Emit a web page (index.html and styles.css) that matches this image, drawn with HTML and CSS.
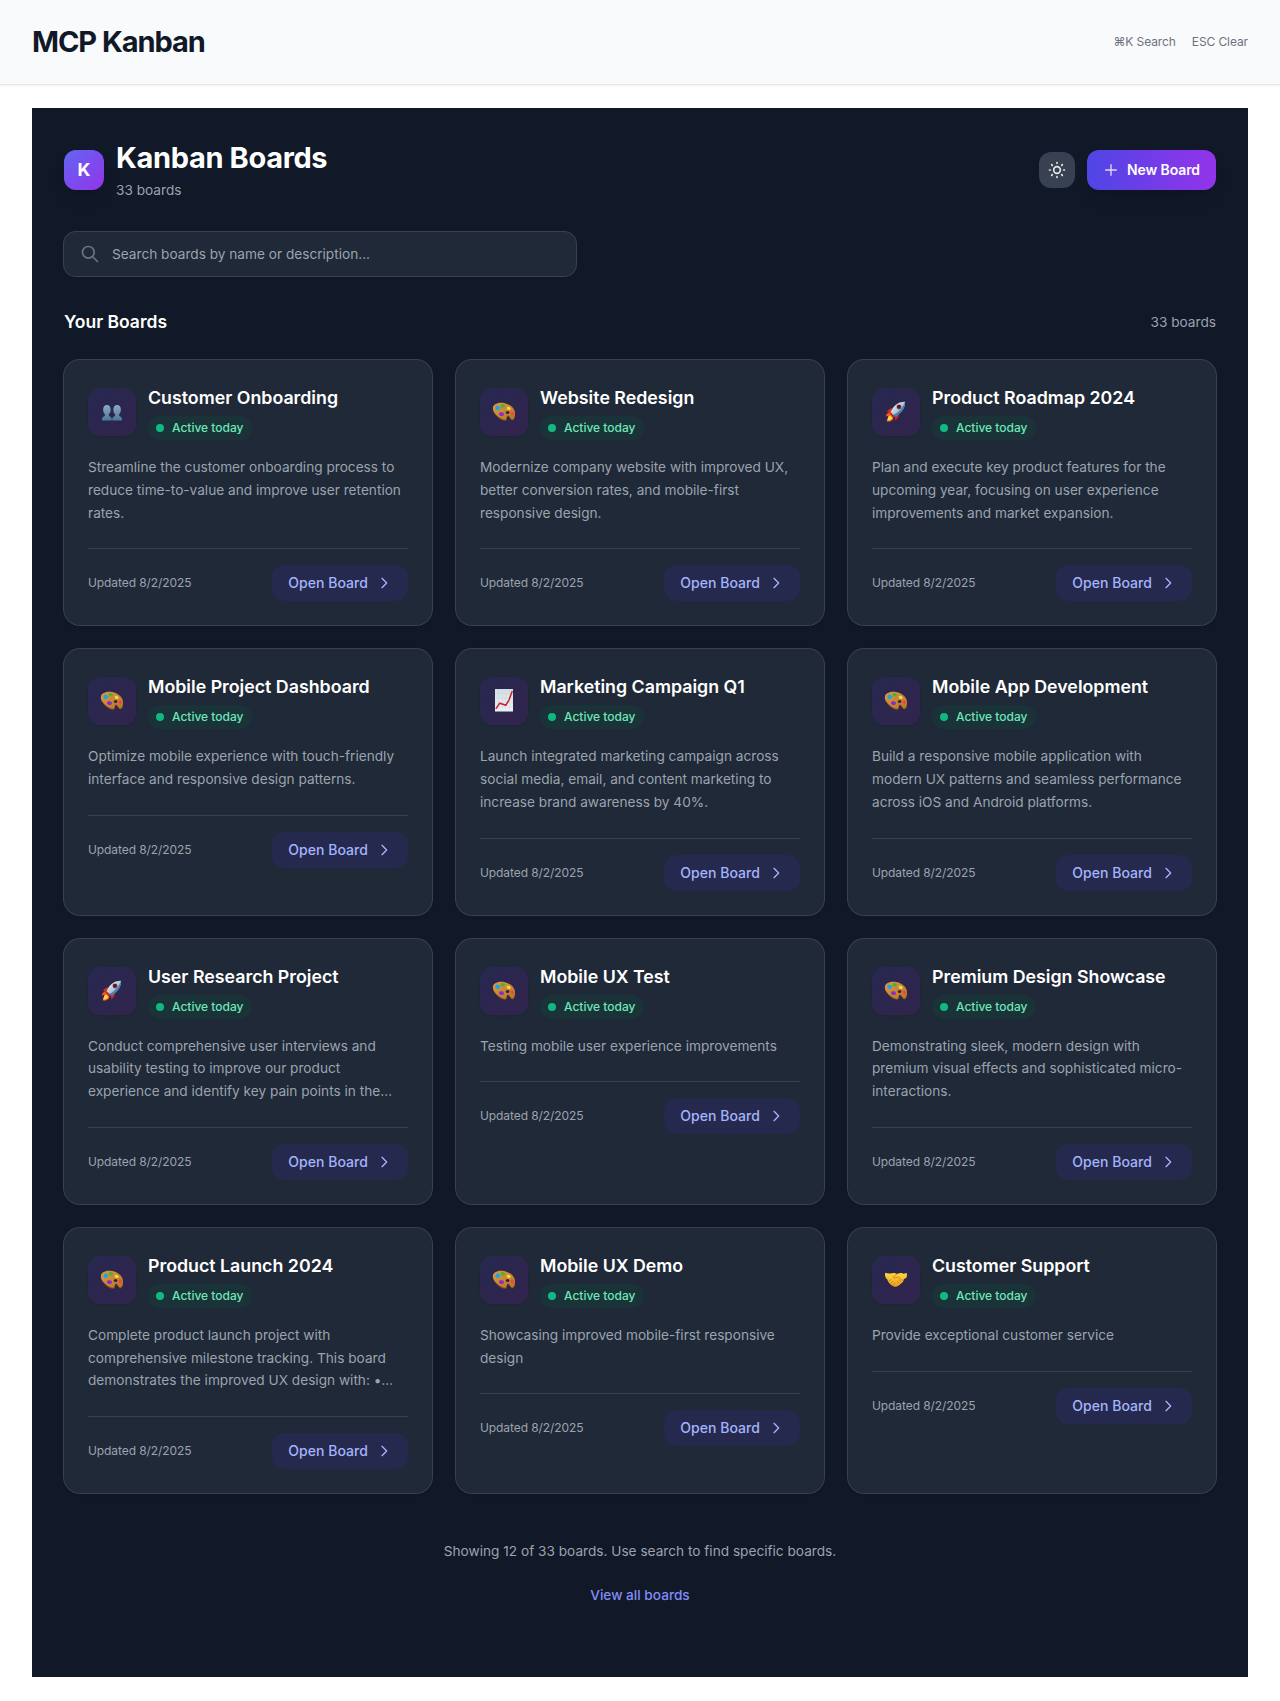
FILE: index.html
```html
<!DOCTYPE html>
<html lang="en">
<head>
<meta charset="utf-8">
<title>MCP Kanban</title>
<link rel="stylesheet" href="styles.css">
</head>
<body>
<svg class="sprite" width="0" height="0" aria-hidden="true">
  <defs>
    <linearGradient id="g-people" x1="0" y1="0" x2="0" y2="1"><stop offset="0" stop-color="#86abc5"/><stop offset="1" stop-color="#4d7799"/></linearGradient>
    <linearGradient id="g-wood" x1="0" y1="0" x2="1" y2="1"><stop offset="0" stop-color="#dc9a45"/><stop offset="1" stop-color="#b87425"/></linearGradient>
    <linearGradient id="g-hand" x1="0" y1="0" x2="0" y2="1"><stop offset="0" stop-color="#ffd83f"/><stop offset="1" stop-color="#eb9e1e"/></linearGradient>
    <linearGradient id="g-paper" x1="0" y1="0" x2="0" y2="1"><stop offset="0" stop-color="#d3dde5"/><stop offset="1" stop-color="#f0f3f5"/></linearGradient>
    <linearGradient id="g-rocket" x1="0" y1="0" x2="1" y2="1"><stop offset="0" stop-color="#f2f6f8"/><stop offset=".5" stop-color="#b9cbd6"/><stop offset="1" stop-color="#3d78a8"/></linearGradient>
  </defs>
  <symbol id="people" viewBox="0 0 24 24">
    <g fill="url(#g-people)">
      <path d="M6.900 5C4.500 5 3.100 6.900 3.100 9.400c0 2.200.7 3.800 1.800 4.900.2 1.600-.3 2-1.400 2.500C2.300 17.300 2 18 2 20.600h9.800c0-2.200-.4-3.300-1.600-3.800-1.100-.5-1.500-.9-1.300-2.500 1.100-1.100 1.800-2.700 1.800-4.900C10.700 6.900 9.300 5 6.900 5z"/>
      <path d="M17.100 5c-2.400 0-3.800 1.900-3.800 4.400 0 2.200.7 3.800 1.800 4.900.2 1.600-.2 2-1.300 2.500-1.200.5-1.600 1.600-1.600 3.800H22c0-2.600-.3-3.300-1.500-3.800-1.100-.5-1.600-.9-1.400-2.500 1.100-1.100 1.800-2.700 1.800-4.900 0-2.500-1.400-4.400-3.800-4.400z"/>
    </g>
  </symbol>
  <symbol id="palette" viewBox="0 0 24 24">
    <path fill="#7c4a17" d="M1 7.600C2 4 6.800 2.300 12 3.300c6 1.200 11.200 5.400 11.100 10.900 0 3-.8 6.200-2.800 6.200-1.900 0-2.600-4-4.300-3.900-1.400.1-.7 3.100-1.700 3.900-1.400 1.200-5.500-.2-8.300-2.900C2.600 14.300.2 11 1 7.600z"/>
    <path fill="url(#g-wood)" d="M1 7.200C2 3.800 6.800 2.200 12 3.100c6 1.100 11.100 5.100 11 10.400 0 2.900-1 6-2.700 6-1.900 0-2.700-4-4.500-3.900-1.500.1-.8 3.100-1.800 3.800-1.400 1-5.200-.4-8-2.900C2.800 13.600.2 10.600 1 7.200z"/>
    <ellipse cx="15.600" cy="12.500" rx="1.800" ry="1.500" fill="#2a2548"/>
    <path fill="#22a5dc" d="M3.500 8.200c-.5-2 1.200-3.100 2.600-2.500 1.300.5 2.700 1 2.300 2.600-.4 1.500-2 1.300-2.500 1.700-.8.500-2-.3-2.400-1.800z"/>
    <path fill="#43b536" d="M9 4.700c.8-1.100 2.500-.6 3.400.2.800.7 1 1.900-.1 2.400-1.200.5-3-.1-3.400-.9-.2-.6-.2-1.200.1-1.700z"/>
    <path fill="#f5d83a" d="M15 7.200c.9-.9 2.500-.4 3.300.5.700.8.700 1.700-.2 2.100-1.200.5-2.700 0-3.200-.9-.3-.6-.3-1.200.1-1.700z"/>
    <path fill="#ef4250" d="M18.900 12.600c.2-1.100 1.400-1.200 2.200-.5.700.7.900 2.300.2 3-.8.600-1.800-.1-2.200-1-.2-.5-.3-1-.2-1.500z"/>
    <path fill="#862bd3" d="M7.100 13.400c.5-1.300 2.300-1.500 3.600-.8 1.300.6 1.600 2.300.7 3-1 .8-2.700.6-3.600-.1-.7-.6-.9-1.400-.7-2.100z"/>
  </symbol>
  <symbol id="rocket" viewBox="0 -.4 26 26">
    <path fill="#f5521c" d="M6.600 12.800c-2.600.1-4 1.700-4.800 4.800 2-.9 2.800-.5 4.400-.7-2 2-3.300 3.700-3.200 6.100 3.700.4 6.400-.8 7.300-3.900z"/>
    <path fill="#ffd83b" d="M6.200 16c-1.700 1.500-2.500 3.400-2.500 6 2.600-.1 4.600-1 5.600-3.200z"/>
    <path fill="#d42c25" d="M10.800 8.800C7.600 8 4.800 9.500 3 12.800c1.800-.4 3.300-.1 4.800.6zM16 13.800c.5 3.200-.8 6-4 7.900.4-1.900 0-3.300-.8-4.700z"/>
    <path fill="url(#g-rocket)" d="M22.800 1.500c-5.900-.2-10.900 2.800-13.800 7.800-1 1.600-1.800 3-2.100 4.300l4 4c1.600-.3 3.100-1.200 4.600-2.300 4.700-3.300 7.600-8.100 7.300-13.800z"/>
    <path fill="#3a81bd" d="M22.800 1.500c.3 5.700-2.600 10.500-7.300 13.800-1.500 1.100-3 2-4.600 2.300l-1.500-1.500C15.500 13.700 20 9.200 22.800 1.500z"/>
    <circle cx="16.300" cy="7.100" r="2.700" fill="#c42d38"/><circle cx="16.200" cy="7" r="1.900" fill="#25273a"/>
    <path stroke="#b5261f" stroke-width="1.500" d="m6.700 13.500 4.300 4.200"/>
  </symbol>
  <symbol id="chart" viewBox="0 0 24 24">
    <path fill="url(#g-paper)" d="M3 0h18v22.500H3z"/>
    <path stroke="#b7c7d4" stroke-width=".25" d="M6.600 0v22.500M10.200 0v22.500M13.800 0v22.500M17.400 0v22.500M3 4.500h18M3 9h18M3 13.500h18M3 18h18"/>
    <path fill="none" stroke="#cc1d28" stroke-width="1.500" stroke-linecap="round" stroke-linejoin="round" d="m4.200 19.300 3.500-5.100 6.300 2 3.200-5.700 2.900-7.900"/>
  </symbol>
  <symbol id="handshake" viewBox="0 0 24 24">
    <path fill="url(#g-hand)" d="M1.400 4.800c1.700.6 3.300.9 4.900.7 1.600-.1 2.900-.9 4.400-.5L13 6l3-.9c1.700-.3 2.500.7 3.700.6l2.900-.8c.6 1.900.4 3.500-.4 5.100l-2.300 1c-.3 2.700-2 4.100-3.600 5.300-1.900 1.500-3.500 2.800-5.200 2.500-1.800-.3-3.100-1.300-4.700-2.600-1.500-1.200-2.700-2.800-3.100-4.700L1.900 9.900C.9 8.300.7 6.500 1.400 4.800z"/>
    <path fill="none" stroke="#c57a15" stroke-width=".8" stroke-linecap="round" stroke-linejoin="round" d="m13 6-3.400 2.600c-.7 1.100.7 2.100 1.800 1.400L14 8.800l4.500 3.600M14.800 11.700l2.300 2M13 13.200l2.200 2.200M5.200 13l1.800-1.500M7 15l1.900-1.700M9.300 16.900l1.600-1.700"/>
  </symbol>
  <symbol id="chevron" viewBox="0 0 24 24"><path fill="none" stroke="currentColor" stroke-width="2" stroke-linecap="round" stroke-linejoin="round" d="m9 5 7 7-7 7"/></symbol>
</svg>

<header class="topbar">
  <h1 class="brand">MCP Kanban</h1>
  <div class="hints"><span>⌘K Search</span><span>ESC Clear</span></div>
</header>

<main class="panel">
  <div class="head">
    <div class="head-left">
      <div class="logo">K</div>
      <div>
        <h2 class="head-title">Kanban Boards</h2>
        <p class="head-sub">33 boards</p>
      </div>
    </div>
    <div class="actions">
      <button class="theme" aria-label="Toggle theme"><svg width="20" height="20" viewBox="0 0 24 24" fill="none" stroke="currentColor" stroke-width="2" stroke-linecap="round" stroke-linejoin="round"><path d="M12 3v1m0 16v1m9-9h-1M4 12H3m15.364 6.364-.707-.707M6.343 6.343l-.707-.707m12.728 0-.707.707M6.343 17.657l-.707.707M16 12a4 4 0 1 1-8 0 4 4 0 0 1 8 0z"/></svg></button>
      <button class="new"><svg width="16" height="16" viewBox="0 0 24 24" fill="none" stroke="currentColor" stroke-width="2" stroke-linecap="round"><path d="M12 4v16m8-8H4"/></svg>New Board</button>
    </div>
  </div>

  <div class="search">
    <svg width="20" height="20" viewBox="0 0 24 24" fill="none" stroke="currentColor" stroke-width="2" stroke-linecap="round" stroke-linejoin="round"><path d="m21 21-6-6m2-5a7 7 0 1 1-14 0 7 7 0 0 1 14 0z"/></svg>
    <input type="text" placeholder="Search boards by name or description...">
  </div>

  <div class="section-head"><h3>Your Boards</h3><span>33 boards</span></div>

  <div class="grid">
    <article class="card">
      <div class="card-head"><div class="tile"><svg class="emoji"><use href="#people"/></svg></div><div><h4>Customer Onboarding</h4><span class="badge">Active today</span></div></div>
      <p class="desc">Streamline the customer onboarding process to reduce time-to-value and improve user retention rates.</p>
      <div class="card-foot"><span>Updated 8/2/2025</span><button class="open">Open Board<svg><use href="#chevron"/></svg></button></div>
    </article>
    <article class="card">
      <div class="card-head"><div class="tile"><svg class="emoji"><use href="#palette"/></svg></div><div><h4>Website Redesign</h4><span class="badge">Active today</span></div></div>
      <p class="desc">Modernize company website with improved UX, better conversion rates, and mobile-first responsive design.</p>
      <div class="card-foot"><span>Updated 8/2/2025</span><button class="open">Open Board<svg><use href="#chevron"/></svg></button></div>
    </article>
    <article class="card">
      <div class="card-head"><div class="tile"><svg class="emoji"><use href="#rocket"/></svg></div><div><h4>Product Roadmap 2024</h4><span class="badge">Active today</span></div></div>
      <p class="desc">Plan and execute key product features for the upcoming year, focusing on user experience improvements and market expansion.</p>
      <div class="card-foot"><span>Updated 8/2/2025</span><button class="open">Open Board<svg><use href="#chevron"/></svg></button></div>
    </article>
    <article class="card">
      <div class="card-head"><div class="tile"><svg class="emoji"><use href="#palette"/></svg></div><div><h4>Mobile Project Dashboard</h4><span class="badge">Active today</span></div></div>
      <p class="desc">Optimize mobile experience with touch-friendly interface and responsive design patterns.</p>
      <div class="card-foot"><span>Updated 8/2/2025</span><button class="open">Open Board<svg><use href="#chevron"/></svg></button></div>
    </article>
    <article class="card">
      <div class="card-head"><div class="tile"><svg class="emoji"><use href="#chart"/></svg></div><div><h4>Marketing Campaign Q1</h4><span class="badge">Active today</span></div></div>
      <p class="desc">Launch integrated marketing campaign across social media, email, and content marketing to increase brand awareness by 40%.</p>
      <div class="card-foot"><span>Updated 8/2/2025</span><button class="open">Open Board<svg><use href="#chevron"/></svg></button></div>
    </article>
    <article class="card">
      <div class="card-head"><div class="tile"><svg class="emoji"><use href="#palette"/></svg></div><div><h4>Mobile App Development</h4><span class="badge">Active today</span></div></div>
      <p class="desc">Build a responsive mobile application with modern UX patterns and seamless performance across iOS and Android platforms.</p>
      <div class="card-foot"><span>Updated 8/2/2025</span><button class="open">Open Board<svg><use href="#chevron"/></svg></button></div>
    </article>
    <article class="card">
      <div class="card-head"><div class="tile"><svg class="emoji"><use href="#rocket"/></svg></div><div><h4>User Research Project</h4><span class="badge">Active today</span></div></div>
      <p class="desc">Conduct comprehensive user interviews and usability testing to improve our product experience and identify key pain points in the…</p>
      <div class="card-foot"><span>Updated 8/2/2025</span><button class="open">Open Board<svg><use href="#chevron"/></svg></button></div>
    </article>
    <article class="card">
      <div class="card-head"><div class="tile"><svg class="emoji"><use href="#palette"/></svg></div><div><h4>Mobile UX Test</h4><span class="badge">Active today</span></div></div>
      <p class="desc">Testing mobile user experience improvements</p>
      <div class="card-foot"><span>Updated 8/2/2025</span><button class="open">Open Board<svg><use href="#chevron"/></svg></button></div>
    </article>
    <article class="card">
      <div class="card-head"><div class="tile"><svg class="emoji"><use href="#palette"/></svg></div><div><h4>Premium Design Showcase</h4><span class="badge">Active today</span></div></div>
      <p class="desc">Demonstrating sleek, modern design with premium visual effects and sophisticated micro-interactions.</p>
      <div class="card-foot"><span>Updated 8/2/2025</span><button class="open">Open Board<svg><use href="#chevron"/></svg></button></div>
    </article>
    <article class="card">
      <div class="card-head"><div class="tile"><svg class="emoji"><use href="#palette"/></svg></div><div><h4>Product Launch 2024</h4><span class="badge">Active today</span></div></div>
      <p class="desc">Complete product launch project with comprehensive milestone tracking. This board demonstrates the improved UX design with: •…</p>
      <div class="card-foot"><span>Updated 8/2/2025</span><button class="open">Open Board<svg><use href="#chevron"/></svg></button></div>
    </article>
    <article class="card">
      <div class="card-head"><div class="tile"><svg class="emoji"><use href="#palette"/></svg></div><div><h4>Mobile UX Demo</h4><span class="badge">Active today</span></div></div>
      <p class="desc">Showcasing improved mobile-first responsive design</p>
      <div class="card-foot"><span>Updated 8/2/2025</span><button class="open">Open Board<svg><use href="#chevron"/></svg></button></div>
    </article>
    <article class="card">
      <div class="card-head"><div class="tile"><svg class="emoji"><use href="#handshake"/></svg></div><div><h4>Customer Support</h4><span class="badge">Active today</span></div></div>
      <p class="desc">Provide exceptional customer service</p>
      <div class="card-foot"><span>Updated 8/2/2025</span><button class="open">Open Board<svg><use href="#chevron"/></svg></button></div>
    </article>
  </div>

  <div class="more">
    <p>Showing 12 of 33 boards. Use search to find specific boards.</p>
    <button class="view-all">View all boards</button>
  </div>
</main>
</body>
</html>
```

FILE: styles.css
```css
*, *::before, *::after { box-sizing: border-box; }
body { margin: 0; background: #fff; font-family: Inter, "Liberation Sans", sans-serif; font-size: 13.650px; line-height: 20px; }
h1, h2, h3, h4, p { margin: 0; }
button, input { font: inherit; letter-spacing: inherit; border: 0; padding: 0; margin: 0; }
.sprite { display: block; position: absolute; }

.topbar { display: flex; align-items: center; justify-content: space-between; padding: 24px 32px; background: #f9fafc; border-bottom: 1px solid #e2e5ea; box-shadow: 0 1px 2px rgba(0, 0, 0, .06); }
.brand { font-size: 29px; line-height: 36px; font-weight: 700; letter-spacing: -1.06px; color: #111827; }
.hints { display: flex; gap: 16px; font-size: 12px; line-height: 16px; letter-spacing: -.1px; color: #6b7280; }

.panel { margin: 23px 32px 24px; padding: 32px 32px 64px; background: #111827; }
.head { display: flex; align-items: center; justify-content: space-between; }
.head-left { display: flex; align-items: center; gap: 12px; }
.logo { display: flex; align-items: center; justify-content: center; width: 40px; height: 40px; border-radius: 12px; background: linear-gradient(135deg, #6366f1, #9333ea); color: #fff; font-size: 18px; line-height: 28px; font-weight: 700; box-shadow: 0 10px 15px -3px rgba(0, 0, 0, .1), 0 4px 6px -4px rgba(0, 0, 0, .1); }
.head-title { font-size: 29px; line-height: 36px; font-weight: 700; letter-spacing: -.35px; color: #fff; }
.head-sub { margin-top: 4px; color: #9ca3af; }
.actions { display: flex; align-items: center; gap: 12px; }
.theme { display: flex; align-items: center; justify-content: center; width: 36px; height: 36px; border-radius: 12px; background: #374151; color: #e5e7eb; }
.new { display: flex; align-items: center; gap: 8px; height: 40px; padding: 0 16px; border-radius: 12px; background: linear-gradient(90deg, #4f46e5, #9333ea); color: #fff; font-size: 14px; font-weight: 600; letter-spacing: -.1px; box-shadow: 0 10px 15px -3px rgba(0, 0, 0, .1), 0 4px 6px -4px rgba(0, 0, 0, .1); }
.new svg { opacity: .8; }

.search { display: flex; align-items: center; gap: 12px; width: 512px; height: 44px; margin-top: 32px; padding: 0 16px; border-radius: 12px; background: #1f2937; box-shadow: 0 0 0 1px #374151; color: #6b7280; }
.search input { flex: 1; height: 20px; background: none; color: #fff; outline: 0; }
.search input::placeholder { color: #9ca3af; opacity: 1; }

.section-head { display: flex; align-items: center; justify-content: space-between; margin: 32px 0 24px; color: #9ca3af; }
.section-head h3 { font-size: 17.500px; line-height: 28px; font-weight: 600; color: #fff; }

.grid { display: grid; grid-template-columns: repeat(3, 1fr); gap: 24px; }
.card { padding: 24px; border-radius: 16px; background: #1f2937; box-shadow: 0 0 0 1px #374151, 0 1px 3px rgba(0, 0, 0, .1); }
.card-head { display: flex; align-items: center; gap: 12px; }
.card-head h4 { margin-bottom: 4px; font-size: 17.800px; line-height: 28px; font-weight: 600; color: #fff; }
.tile { display: flex; align-items: center; justify-content: center; width: 48px; height: 48px; border-radius: 12px; background: linear-gradient(135deg, #262850, #32244d); box-shadow: 0 1px 2px rgba(0, 0, 0, .08); }
.emoji { width: 24px; height: 24px; }
.badge { display: flex; align-items: center; gap: 8px; width: max-content; padding: 4px 8px; border-radius: 12px; background: #1a3338; color: #6ee7b7; font-size: 12px; line-height: 16px; font-weight: 500; }
.badge::before { content: ""; width: 8px; height: 8px; border-radius: 50%; background: #10b981; }
.desc { margin-top: 16px; line-height: 22.75px; color: #9ca3af; }
.card-foot { display: flex; align-items: center; justify-content: space-between; margin-top: 24px; padding-top: 16px; border-top: 1px solid #374151; font-size: 12px; line-height: 16px; letter-spacing: -.09px; color: #9ca3af; }
.open { display: flex; align-items: center; gap: 8px; height: 36px; padding: 0 16px; border-radius: 12px; background: #24294d; color: #a5b4fc; font-size: 14px; line-height: 20px; font-weight: 500; letter-spacing: .05px; }
.open svg { width: 16px; height: 16px; }

.more { display: flex; flex-direction: column; align-items: center; gap: 16px; margin-top: 48px; color: #9ca3af; }
.view-all { padding: 8px 16px; background: none; color: #818cf8; font-weight: 500; }
```
